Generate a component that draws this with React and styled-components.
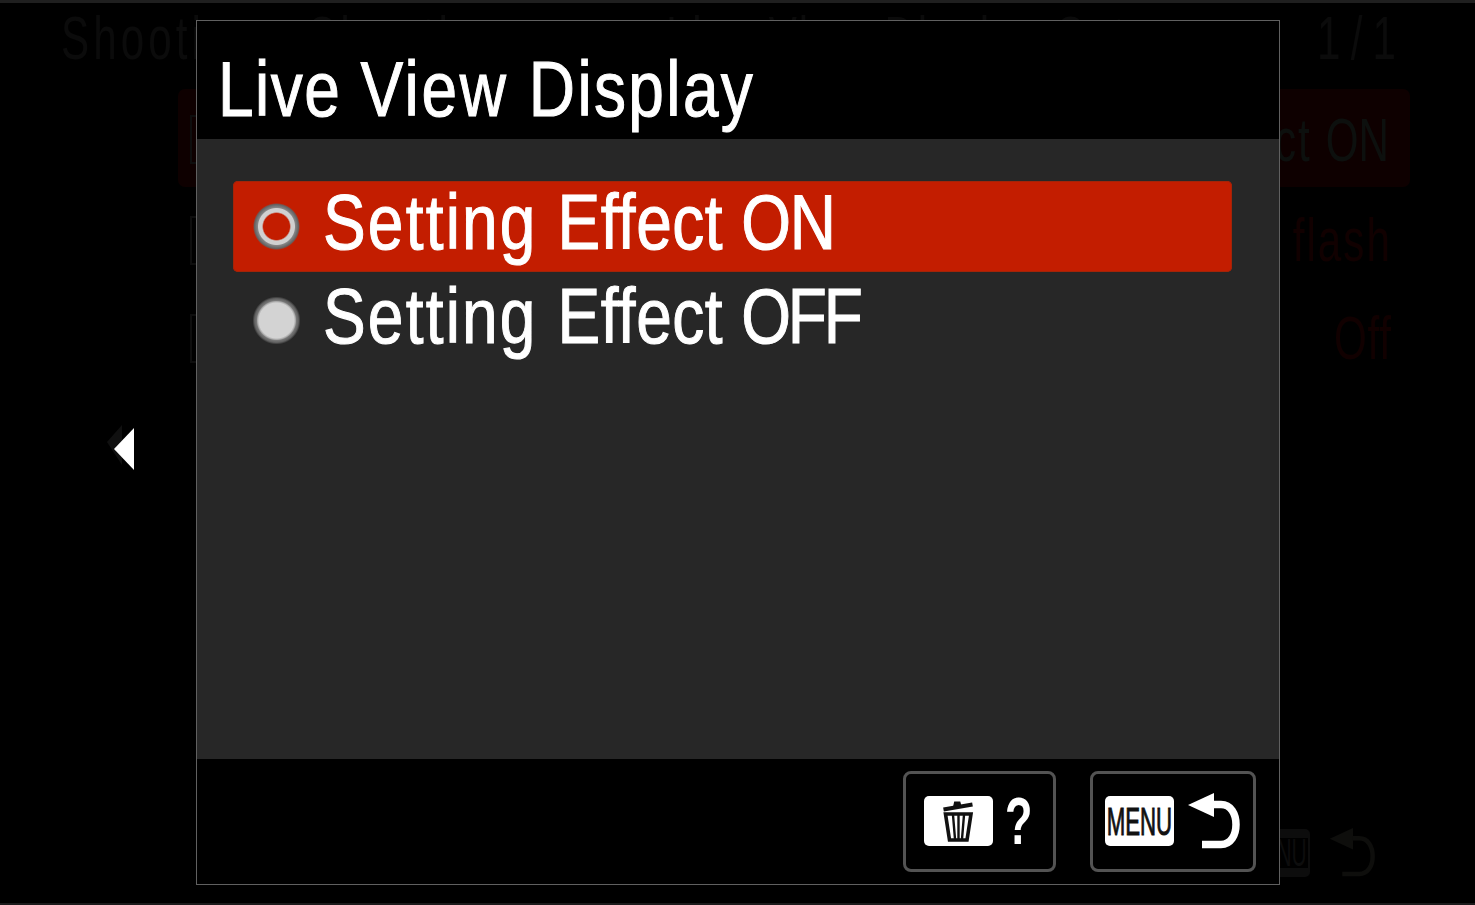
import React from "react";
import styled, { createGlobalStyle } from "styled-components";

const Global = createGlobalStyle`
  *, *::before, *::after { box-sizing: border-box; }
  body { margin: 0; background: #000; overflow: hidden; font-family: "Liberation Sans", Arial, sans-serif; }
`;

const Screen = styled.main`
  position: relative;
  display: flex;
  width: 1475px;
  height: 905px;
  overflow: hidden;
  background: #000;
  border-top: 3px solid #1f1f1f;
  border-bottom: 2px solid #1b1b1b;
`;

/* Horizontally condensed lettering of the camera's menu typeface */
const Condensed = styled.span`
  display: flex;
  flex: none;
  white-space: pre;
  font-size: ${(p) => p.$size}px;
  font-weight: ${(p) => p.$weight || 400};
  line-height: 1;
  color: ${(p) => p.$color || "#fff"};
  transform: scaleX(${(p) => p.$scale});
  transform-origin: ${(p) => p.$origin || "left"} center;
  -webkit-text-stroke: ${(p) => p.$stroke || 0}px currentColor;
  font-variant-ligatures: none;
`;

const Word = styled.span`
  letter-spacing: ${(p) => p.$track}px;
`;

/* ---------- dimmed menu page under the dialog ---------- */
const Underlay = styled.div`
  position: absolute;
  inset: 0;
  display: flex;
  flex-direction: column;
  padding: 0 0 0 61px;
`;

const UnderHeader = styled.div`
  display: flex;
  align-items: center;
  height: 69px;
`;

const Crumb = styled.div`
  flex: none;
  width: ${(p) => p.$width}px;
`;

const UnderRows = styled.div`
  width: 1232px;
  margin: 17px 0 0 117px;
`;

const UnderRow = styled.div`
  display: flex;
  align-items: center;
  justify-content: space-between;
  height: 98px;
  padding: ${(p) => (p.$active ? "3px 21px 0 12px" : "8px 18px 0 12px")};
  border-radius: 7px;
  background: ${(p) => (p.$active ? "#0e0000" : "transparent")};
`;

const UnderIcon = styled.span`
  width: 56px;
  height: 49px;
  border: 2px solid #0e0e0e;
`;

const UnderFooter = styled.div`
  display: flex;
  align-items: center;
  justify-content: flex-end;
  gap: 19px;
  height: 50px;
  margin: auto 98px 25px 0;
`;

const UnderBadge = styled.span`
  display: flex;
  align-items: center;
  justify-content: center;
  width: 69px;
  height: 48px;
  border: solid #0d0d0d;
  border-width: 9px 2px;
  border-radius: 5px;
`;

/* ---------- left arrow ---------- */
const ArrowColumn = styled.div`
  display: flex;
  align-items: center;
  justify-content: flex-end;
  flex: none;
  width: 196px;
  height: 889px;
  padding-right: 61px;
`;

/* ---------- dialog ---------- */
const Dialog = styled.section`
  position: relative;
  display: flex;
  flex-direction: column;
  flex: none;
  width: 1084px;
  height: 865px;
  margin-top: 17px;
  background: #000;
  border: 1.5px solid #606060;
`;

const DialogHeader = styled.header`
  display: flex;
  align-items: center;
  height: 118px;
  padding: 18px 0 0 21px;
`;

const DialogBody = styled.div`
  display: flex;
  flex-direction: column;
  gap: 3px;
  height: 620px;
  padding: 42px 47px 0 36px;
  background: #272727;
`;

const Option = styled.div`
  display: flex;
  align-items: center;
  height: 91px;
  padding-left: 19px;
  border-radius: 5px;
  background: ${(p) => (p.$selected ? "#c31d00" : "transparent")};
  box-shadow: ${(p) => (p.$selected ? "inset 0 0 0 1px #a32408" : "none")};
`;

const OptionLabel = styled.div`
  padding: 0 0 9px 22px;
`;

const Radio = styled.span`
  flex: none;
  width: 49px;
  height: 49px;
  border-radius: 50%;
  background: ${(p) =>
    p.$selected
      ? "radial-gradient(circle, #c31d00 0 13px, #d0d0d0 14.5px 18px, #858585 19px, #636363 22px, transparent 23.5px)"
      : "radial-gradient(circle, #d3d3d3 0 17.5px, #aaa 19px, #777 20px, #606060 22px, transparent 24px)"};
`;

const DialogFooter = styled.footer`
  display: flex;
  align-items: flex-start;
  justify-content: flex-end;
  gap: 34px;
  flex: 1;
  padding: 12px 23px 0 0;
`;

const Key = styled.div`
  display: flex;
  align-items: center;
  width: ${(p) => p.$width}px;
  height: 101px;
  padding: 0 0 1px ${(p) => p.$pad}px;
  border: 3px solid #535353;
  border-radius: 8px;
`;

const Badge = styled.span`
  display: flex;
  align-items: center;
  justify-content: center;
  flex: none;
  width: 69px;
  height: 50px;
  border-radius: 5px;
  background: #fff;
`;

const HelpMark = styled.span`
  margin-left: 12px;
`;

const BackSlot = styled.span`
  display: flex;
  margin-left: 14px;
`;

const Trash = () => (
  <svg width="32" height="44" viewBox="0 0 32 44" fill="none" stroke="#111">
    <path d="M0.5 10.5 L29.5 5.5" strokeWidth="4.2" />
    <path d="M11 8 L12 3.5 H16.5 L17.5 7" fill="#111" strokeWidth="2" />
    <path d="M2.5 15 H28 L24 41 H6.5 Z" strokeWidth="3.6" />
    <path d="M10 16 L12 40 M15.5 16 V40 M21 16 L19 40" strokeWidth="2.4" />
  </svg>
);

const Back = ({ color = "#fff", width = 52, height = 56, thin = 7.5 }) => (
  <svg width={width} height={height} viewBox="0 0 52 56">
    <path d="M0 12 L26 0 V24 Z" fill={color} />
    <path
      d="M25 11.5 H33 C43 11.5 48 21 48 31.5 C48 42 43 51.5 33 51.5 H14"
      fill="none"
      stroke={color}
      strokeWidth={thin}
    />
  </svg>
);

const ArrowIcon = () => (
  <svg width="29" height="46" viewBox="0 0 29 46">
    <path d="M1 17 L16 0 V40 Z" fill="#101010" />
    <path d="M8 24 L28 3 V45 Z" fill="#fff" />
  </svg>
);

const under = { $size: 62, $scale: 0.68, $color: "#0b0b0b" };
const label = { $size: 78, $scale: 0.82, $stroke: 1.1 };

export default function App() {
  return (
    <>
      <Global />
      <Screen>
        <Underlay>
          <UnderHeader>
            <Crumb $width={247}>
              <Condensed {...under}><Word $track={6}>Shooting</Word></Condensed>
            </Crumb>
            <Crumb $width={358}>
              <Condensed {...under}><Word $track={6}>Shooting</Word></Condensed>
            </Crumb>
            <Crumb $width={651}>
              <Condensed {...under}><Word $track={4}>Live View Display Set.</Word></Condensed>
            </Crumb>
            <Crumb $width={90}>
              <Condensed {...under}><Word $track={15}>1/1</Word></Condensed>
            </Crumb>
          </UnderHeader>
          <UnderRows>
            <UnderRow $active>
              <UnderIcon />
              <Condensed {...under} $origin="right" $color="#0d100e"><Word $track={3}>Setting Effect </Word><Word $track={0}>ON</Word></Condensed>
            </UnderRow>
            <UnderRow>
              <UnderIcon />
              <Condensed {...under} $origin="right" $color="#110000"><Word $track={3}>flash</Word></Condensed>
            </UnderRow>
            <UnderRow>
              <UnderIcon />
              <Condensed {...under} $origin="right" $color="#110000"><Word $track={1}>Off</Word></Condensed>
            </UnderRow>
          </UnderRows>
          <UnderFooter>
            <UnderBadge>
              <Condensed $size={38} $scale={0.55} $origin="center" $color="#0d0d0d"><Word $track={0}>MENU</Word></Condensed>
            </UnderBadge>
            <Back color="#0e0e0c" width={48} height={50} thin={5} />
          </UnderFooter>
        </Underlay>

        <ArrowColumn>
          <ArrowIcon />
        </ArrowColumn>

        <Dialog>
          <DialogHeader>
            <Condensed {...label}>
              <Word $track={1.8}>Live </Word>
              <Word $track={3.2}>View </Word>
              <Word $track={2.9}>Display</Word>
            </Condensed>
          </DialogHeader>
          <DialogBody>
            <Option $selected>
              <Radio $selected />
              <OptionLabel>
                <Condensed {...label}>
                  <Word $track={2.7}>Setting </Word>
                  <Word $track={0.6}>Effect </Word>
                  <Word $track={-1.5}>ON</Word>
                </Condensed>
              </OptionLabel>
            </Option>
            <Option>
              <Radio />
              <OptionLabel>
                <Condensed {...label}>
                  <Word $track={2.7}>Setting </Word>
                  <Word $track={0.6}>Effect </Word>
                  <Word $track={-3.8}>OFF</Word>
                </Condensed>
              </OptionLabel>
            </Option>
          </DialogBody>
          <DialogFooter>
            <Key $width={153} $pad={18}>
              <Badge><Trash /></Badge>
              <HelpMark>
                <Condensed $size={66} $weight={700} $scale={0.68}>?</Condensed>
              </HelpMark>
            </Key>
            <Key $width={166} $pad={12}>
              <Badge>
                <Condensed $size={39} $scale={0.57} $origin="center" $color="#111" $stroke={1}>MENU</Condensed>
              </Badge>
              <BackSlot><Back /></BackSlot>
            </Key>
          </DialogFooter>
        </Dialog>
      </Screen>
    </>
  );
}
